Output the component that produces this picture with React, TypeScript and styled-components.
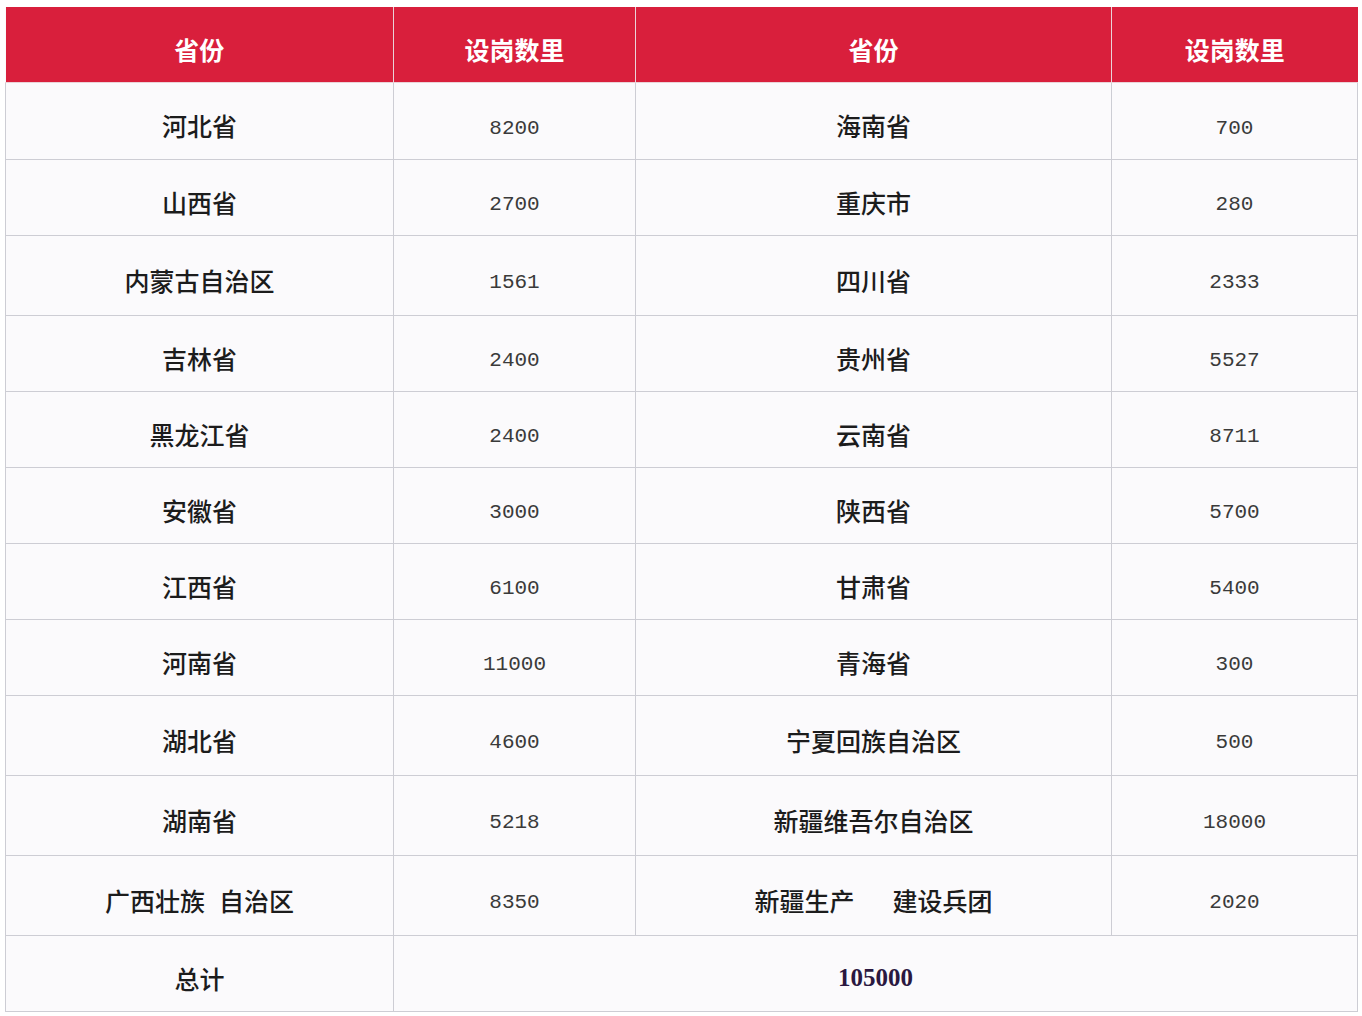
import React from 'react';
import styled, { createGlobalStyle } from 'styled-components';

const GlobalStyle = createGlobalStyle`
  body {
    margin: 0;
    background: #ffffff;
    font-family: "Noto Sans CJK SC", "Noto Sans", sans-serif;
  }
`;

const Page = styled.div`
  padding: 7px 5px 0 5px;
`;

const Table = styled.table`
  width: 1352px;
  border-collapse: collapse;
  table-layout: fixed;
  background: #fbfafc;
`;

const Col = styled.col<{ $w: number }>`
  width: ${(p) => p.$w}px;
`;

const HeadCell = styled.th`
  height: 67px;
  padding: 8px 0 0;
  background: #d91f3c;
  color: #ffffff;
  font-size: 25px;
  font-weight: 700;
  text-align: center;
  border-left: 1px solid #ead3d8;
  border-bottom: 1px solid #ead3d8;

  &:first-child {
    border-left: none;
  }
`;

const Row = styled.tr<{ $h: number }>`
  height: ${(p) => p.$h}px;
`;

const Cell = styled.td<{ $num?: boolean }>`
  padding: ${(p) => (p.$num ? '12px' : '8px')} 0 0;
  text-align: center;
  border: 1px solid #cdcdd4;
`;

const Name = styled.span`
  font-size: 25px;
  font-weight: 500;
  color: #1c1c1c;
  white-space: pre;
`;

const Gap = styled.span<{ $w: number }>`
  display: inline-block;
  width: ${(p) => p.$w}px;
`;

const Num = styled.span`
  font-family: "Liberation Mono", "DejaVu Sans Mono", monospace;
  font-size: 21px;
  color: #3a3a3a;
`;

const Total = styled.span`
  font-family: "Liberation Serif", serif;
  font-size: 25px;
  font-weight: 700;
  color: #2a1840;
`;

type Entry = { name: React.ReactNode; count: string };

const rows: { h: number; left: Entry; right: Entry }[] = [
  { h: 77, left: { name: '河北省', count: '8200' }, right: { name: '海南省', count: '700' } },
  { h: 76, left: { name: '山西省', count: '2700' }, right: { name: '重庆市', count: '280' } },
  { h: 80, left: { name: '内蒙古自治区', count: '1561' }, right: { name: '四川省', count: '2333' } },
  { h: 76, left: { name: '吉林省', count: '2400' }, right: { name: '贵州省', count: '5527' } },
  { h: 76, left: { name: '黑龙江省', count: '2400' }, right: { name: '云南省', count: '8711' } },
  { h: 76, left: { name: '安徽省', count: '3000' }, right: { name: '陕西省', count: '5700' } },
  { h: 76, left: { name: '江西省', count: '6100' }, right: { name: '甘肃省', count: '5400' } },
  { h: 76, left: { name: '河南省', count: '11000' }, right: { name: '青海省', count: '300' } },
  { h: 80, left: { name: '湖北省', count: '4600' }, right: { name: '宁夏回族自治区', count: '500' } },
  { h: 80, left: { name: '湖南省', count: '5218' }, right: { name: '新疆维吾尔自治区', count: '18000' } },
  {
    h: 80,
    left: { name: <>广西壮族<Gap $w={14} />自治区</>, count: '8350' },
    right: { name: <>新疆生产<Gap $w={38} />建设兵团</>, count: '2020' },
  },
];

const App: React.FC = () => {
  return (
    <Page>
      <GlobalStyle />
      <Table>
        <colgroup>
          <Col $w={388} />
          <Col $w={242} />
          <Col $w={476} />
          <Col $w={246} />
        </colgroup>
        <thead>
          <tr>
            <HeadCell>省份</HeadCell>
            <HeadCell>设岗数里</HeadCell>
            <HeadCell>省份</HeadCell>
            <HeadCell>设岗数里</HeadCell>
          </tr>
        </thead>
        <tbody>
          {rows.map((r, i) => (
            <Row key={i} $h={r.h}>
              <Cell><Name>{r.left.name}</Name></Cell>
              <Cell $num><Num>{r.left.count}</Num></Cell>
              <Cell><Name>{r.right.name}</Name></Cell>
              <Cell $num><Num>{r.right.count}</Num></Cell>
            </Row>
          ))}
          <Row $h={76}>
            <Cell><Name>总计</Name></Cell>
            <Cell colSpan={3}><Total>105000</Total></Cell>
          </Row>
        </tbody>
      </Table>
    </Page>
  );
};

export default App;
